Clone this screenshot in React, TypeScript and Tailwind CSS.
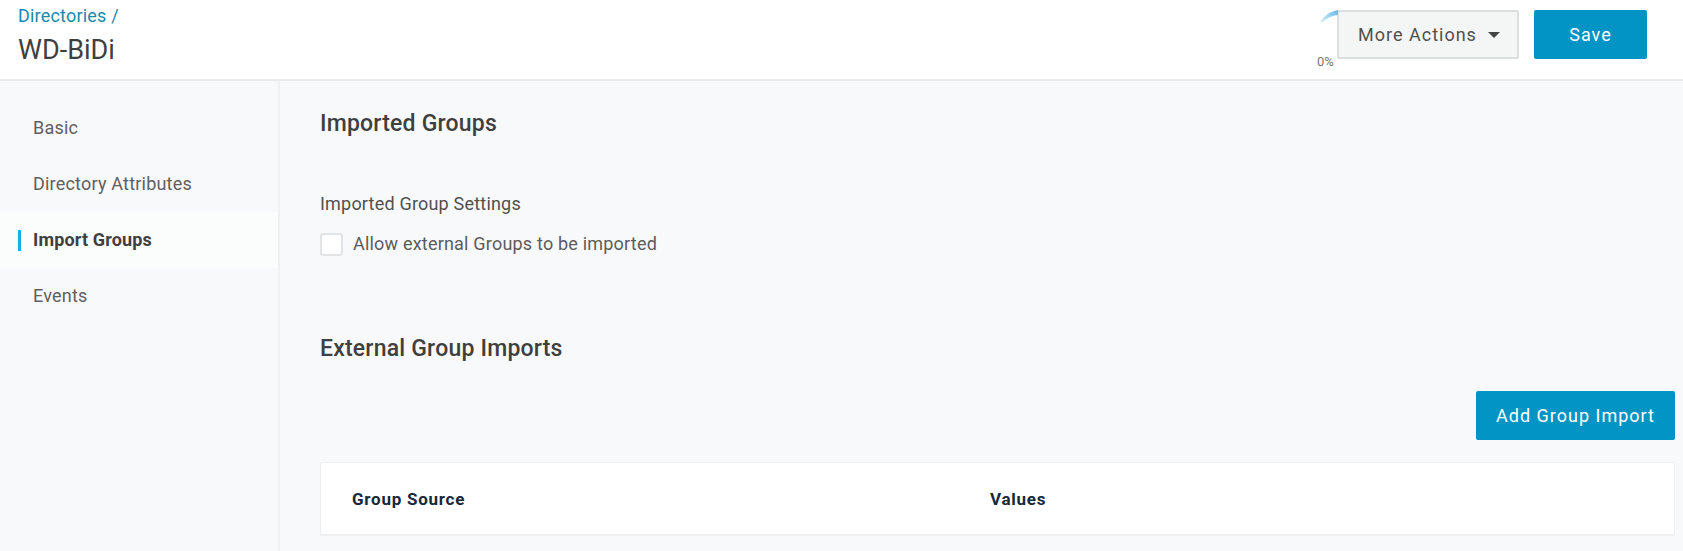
const NAV_ITEMS = ['Basic', 'Directory Attributes', 'Import Groups', 'Events'];
const ACTIVE_ITEM = 'Import Groups';

function Header() {
  return (
    <header className="flex h-[81px] shrink-0 items-start justify-between border-b-2 border-[#e9eaec] bg-white pl-[18px] pr-[36px]">
      <div className="flex flex-col">
        <a className="mt-[6px] text-[18px] leading-[20px] tracking-[0.2px] text-[#1a8aad]">Directories /</a>
        <h1 className="mt-[9px] text-[27px] leading-[30px] text-[#3f3f3f]">WD-BiDi</h1>
      </div>
      <div className="relative mt-[10px] flex items-center gap-[15px]">
        <div className="absolute left-[-18px] top-0 h-[14px] w-[20px]">
          <svg width="20" height="14" viewBox="0 0 20 14" fill="none">
            <defs>
              <linearGradient id="spinner" x1="0" y1="1" x2="1" y2="0">
                <stop offset="0" stopColor="#dff1fb" />
                <stop offset="1" stopColor="#5fb7e8" />
              </linearGradient>
            </defs>
            <path d="M1 12 C5 6 11 1.5 19 0 L19 5 C13 5.5 8 8 3 12.5 Z" fill="url(#spinner)" />
          </svg>
        </div>
        <span className="absolute left-[-20px] top-[45px] text-[13px] leading-[14px] text-[#777777]">0%</span>
        <button className="flex h-[49px] w-[182px] items-center justify-center gap-[11px] rounded-[2px] border-2 border-[#dcdddd] bg-[#f4f5f5] pl-[2px] text-[18px] tracking-[1px] text-[#505050]">
          More Actions
          <span className="h-0 w-0 border-x-[6px] border-t-[6px] border-x-transparent border-t-[#444444]" />
        </button>
        <button className="h-[49px] w-[113px] rounded-[2px] bg-[#0294c4] text-[18px] tracking-[1px] text-white">
          Save
        </button>
      </div>
    </header>
  );
}

function Sidebar() {
  return (
    <nav className="flex w-[280px] shrink-0 flex-col border-r-2 border-[#f0f1f3] pt-[19px]">
      {NAV_ITEMS.map((item) => {
        const active = item === ACTIVE_ITEM;
        return (
          <div
            key={item}
            className={
              active
                ? 'relative flex h-[56px] items-center bg-[#fbfcfc] pl-[33px] text-[18px] font-bold leading-[20px] tracking-[0.15px] text-[#3f3f3f]'
                : 'flex h-[56px] items-center pl-[33px] text-[18px] leading-[20px] tracking-[0.2px] text-[#606060]'
            }
          >
            {active && <span className="absolute left-[18px] top-[18px] h-[21px] w-[3px] bg-[#12b0e8]" />}
            {item}
          </div>
        );
      })}
    </nav>
  );
}

function GroupTable() {
  return (
    <div className="mt-[22px] flex h-[74px] items-center rounded-[2px] border border-b-2 border-[#eeeff1] bg-white pl-[31px] pt-[2px] text-[17px] font-bold tracking-[0.75px] text-[#15293a]">
      <div className="w-[638px]">Group Source</div>
      <div>Values</div>
    </div>
  );
}

export default function App() {
  return (
    <div className="flex h-[551px] w-[1683px] flex-col overflow-hidden bg-[#f8f9fb] font-['Roboto',sans-serif]">
      <Header />
      <div className="flex min-h-0 flex-1">
        <Sidebar />
        <main className="flex-1 pl-[40px] pr-[8px]">
          <h2 className="mt-[31px] text-[23px] font-medium leading-[24px] tracking-[0.2px] text-[#3f3f3f]">Imported Groups</h2>
          <p className="mt-[58px] text-[18px] leading-[20px] tracking-[0.2px] text-[#505050]">Imported Group Settings</p>
          <label className="mt-[17px] flex items-center gap-[10px]">
            <span className="mt-[2px] h-[23px] w-[23px] rounded-[3px] border-2 border-[#e2e3e5] bg-white" />
            <span className="text-[18px] leading-[20px] tracking-[0.2px] text-[#5c5c5c]">Allow external Groups to be imported</span>
          </label>
          <h2 className="mt-[81px] text-[23px] font-medium leading-[24px] tracking-[0.2px] text-[#3f3f3f]">External Group Imports</h2>
          <div className="mt-[30px] flex justify-end">
            <button className="h-[49px] w-[199px] rounded-[2px] bg-[#0294c4] text-[18px] tracking-[1px] text-white">
              Add Group Import
            </button>
          </div>
          <GroupTable />
        </main>
      </div>
    </div>
  );
}
